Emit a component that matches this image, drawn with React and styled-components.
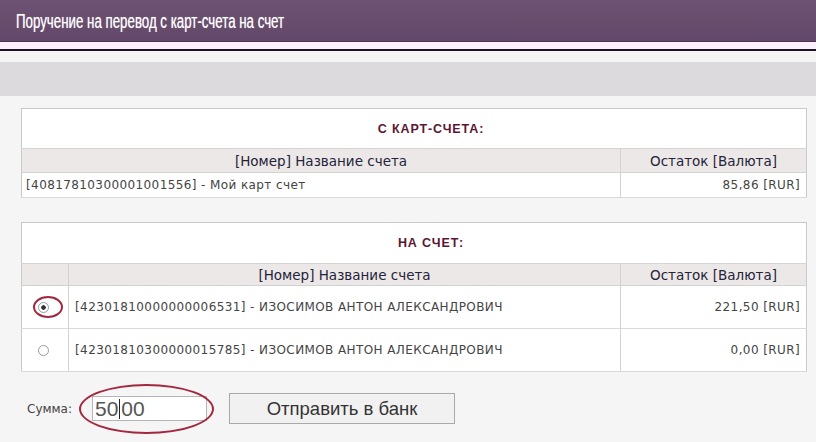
import React from "react";
import styled, { createGlobalStyle } from "styled-components";

const GlobalStyle = createGlobalStyle`
  body {
    margin: 0;
    background: #f6f5f6;
    font-family: "Liberation Sans", Arial, sans-serif;
  }
`;

// данные таблиц
const fromAccounts = [
  { id: "40817810300001001556", name: "Мой карт счет", rest: "85,86", cur: "RUR" },
];

const toAccounts = [
  { id: "42301810000000006531", name: "ИЗОСИМОВ АНТОН АЛЕКСАНДРОВИЧ", rest: "221,50", cur: "RUR", checked: true },
  { id: "42301810300000015785", name: "ИЗОСИМОВ АНТОН АЛЕКСАНДРОВИЧ", rest: "0,00", cur: "RUR" },
];

function App() {
  return (
    <Page>
      <GlobalStyle />
      <Header>
        <HeaderTitle>Поручение на перевод с карт-счета на счет</HeaderTitle>
      </Header>
      <PinkStrip />
      <DarkLine />
      <Toolbar />
      <Content>
        <AccTable>
          <tbody>
            <tr>
              <Caption colSpan={2} $h={39}>С КАРТ-СЧЕТА:</Caption>
            </tr>
            <tr>
              <HeadCell $h={23}>[Номер] Название счета</HeadCell>
              <HeadCell $w={185}>Остаток [Валюта]</HeadCell>
            </tr>
            {fromAccounts.map((a) => (
              <tr key={a.id}>
                <Cell $h={24}>
                  [{a.id}] - {a.name}
                </Cell>
                <Cell $right>
                  {a.rest} [{a.cur}]
                </Cell>
              </tr>
            ))}
          </tbody>
        </AccTable>

        <AccTable>
          <tbody>
            <tr>
              <Caption colSpan={3} $h={40}>НА СЧЕТ:</Caption>
            </tr>
            <tr>
              <HeadCell $w={46} $h={21} />
              <HeadCell>[Номер] Название счета</HeadCell>
              <HeadCell $w={185}>Остаток [Валюта]</HeadCell>
            </tr>
            {toAccounts.map((a) => (
              <tr key={a.id}>
                <RadioCell $h={42}>
                  <Radio $checked={a.checked} />
                  {a.checked && <Marker />}
                </RadioCell>
                <Cell $pad={6}>
                  [{a.id}] - {a.name}
                </Cell>
                <Cell $right>
                  {a.rest} [{a.cur}]
                </Cell>
              </tr>
            ))}
          </tbody>
        </AccTable>

        <SumRow>
          <SumLabel>Сумма:</SumLabel>
          <InputWrap>
            <SumInput>
              50<Caret />00
            </SumInput>
            <InputMarker />
          </InputWrap>
          <SendButton>Отправить в банк</SendButton>
        </SumRow>
      </Content>
    </Page>
  );
}

export default App;

const Page = styled.div`
  width: 816px;
  height: 442px;
  overflow: hidden;
`;

// шапка
const Header = styled.div`
  height: 42px;
  background: linear-gradient(#6e5273, #624868);
  display: flex;
  align-items: center;
  padding-left: 16px;
  box-shadow: inset 0 -1px 0 #4a3450;
`;

const HeaderTitle = styled.h1`
  margin: 0;
  font-weight: normal;
  font-size: 20px;
  color: #fff;
  white-space: nowrap;
  transform: scaleX(0.665);
  transform-origin: left center;
  text-shadow: 0 0 1px rgba(255, 255, 255, 0.6);
`;

const PinkStrip = styled.div`
  height: 7px;
  background: #fcf0fc;
`;

const DarkLine = styled.div`
  height: 2px;
  background: #1c1420;
`;

const Toolbar = styled.div`
  height: 34px;
  margin-top: 11px;
  background: #dddadd;
`;

const Content = styled.div`
  padding: 12px 10px 0 21px;
  display: flex;
  flex-direction: column;
  gap: 24px;
`;

// таблицы счетов
const AccTable = styled.table`
  width: 786px;
  border-collapse: collapse;
  background: #fff;
  border: 1px solid #c9c9c9;
  font-family: "DejaVu Sans", Verdana, sans-serif;
  font-size: 12px;
  color: #333;

  td {
    padding: 0;
  }
`;

const Caption = styled.td`
  height: ${(p) => p.$h}px;
  padding-left: 34px !important;
  text-align: center;
  font-family: "Liberation Sans", Arial, sans-serif;
  font-weight: bold;
  font-size: 12.5px;
  letter-spacing: 0.9px;
  color: #5c1633;
  border-bottom: 1px solid #d4d4d4;
`;

const HeadCell = styled.td`
  height: ${(p) => (p.$h ? `${p.$h}px` : "auto")};
  width: ${(p) => (p.$w ? `${p.$w}px` : "auto")};
  background: #ede8e8;
  text-align: center;
  font-size: 13.5px;
  color: #23233a;
  border-left: 1px solid #d2d2d2;
  border-bottom: 1px solid #d2d2d2;

  &:first-child {
    border-left: none;
  }
`;

const Cell = styled.td`
  height: ${(p) => (p.$h ? `${p.$h}px` : "auto")};
  padding: 0 ${(p) => (p.$right ? 6 : 0)}px 0 ${(p) => (p.$pad ? p.$pad : 4)}px !important;
  text-align: ${(p) => (p.$right ? "right" : "left")};
  font-size: 12px;
  letter-spacing: 0.4px;
  color: #444;
  border-left: 1px solid #d2d2d2;
  border-bottom: 1px solid #d9d9d9;
  white-space: nowrap;

  &:first-child {
    border-left: none;
  }
`;

const RadioCell = styled.td`
  position: relative;
  height: ${(p) => p.$h}px;
  text-align: center;
  border-bottom: 1px solid #d9d9d9;
`;

const Radio = styled.span`
  display: inline-block;
  width: 9px;
  height: 9px;
  margin-right: 4px;
  border-radius: 50%;
  border: 1px solid #9a9a9a;
  background: ${(p) =>
    p.$checked ? "radial-gradient(circle, #333 0 2px, #fff 2.5px)" : "#fff"};
  vertical-align: middle;
`;

// красная обводка поверх выбранного счета
const Marker = styled.span`
  position: absolute;
  left: 11px;
  top: 10px;
  width: 26px;
  height: 18px;
  border: 2px solid #a3283f;
  border-radius: 50%;
`;

// сумма и кнопка
const SumRow = styled.div`
  display: flex;
  align-items: center;
  margin-top: -3px;
  padding-left: 6px;
`;

const SumLabel = styled.span`
  font-family: "DejaVu Sans", Verdana, sans-serif;
  font-size: 12px;
  color: #444;
  width: 65px;
`;

const InputWrap = styled.div`
  position: relative;
  margin-right: 22px;
`;

const SumInput = styled.div`
  box-sizing: border-box;
  width: 115px;
  height: 25px;
  border: 1px solid #b5b5b5;
  background: #fff;
  display: flex;
  align-items: center;
  padding-left: 2px;
  font-size: 21px;
  color: #555;
`;

const Caret = styled.span`
  display: inline-block;
  width: 1px;
  height: 20px;
  background: #222;
  margin: 0 1px;
`;

const InputMarker = styled.span`
  position: absolute;
  left: -13px;
  top: -12px;
  width: 131px;
  height: 46px;
  border: 2px solid #a3283f;
  border-radius: 50%;
`;

const SendButton = styled.button`
  width: 226px;
  height: 31px;
  background: #f1f1f1;
  border: 1px solid #a9a9a9;
  font-family: "Liberation Sans", Arial, sans-serif;
  font-size: 18.5px;
  color: #333;
`;
